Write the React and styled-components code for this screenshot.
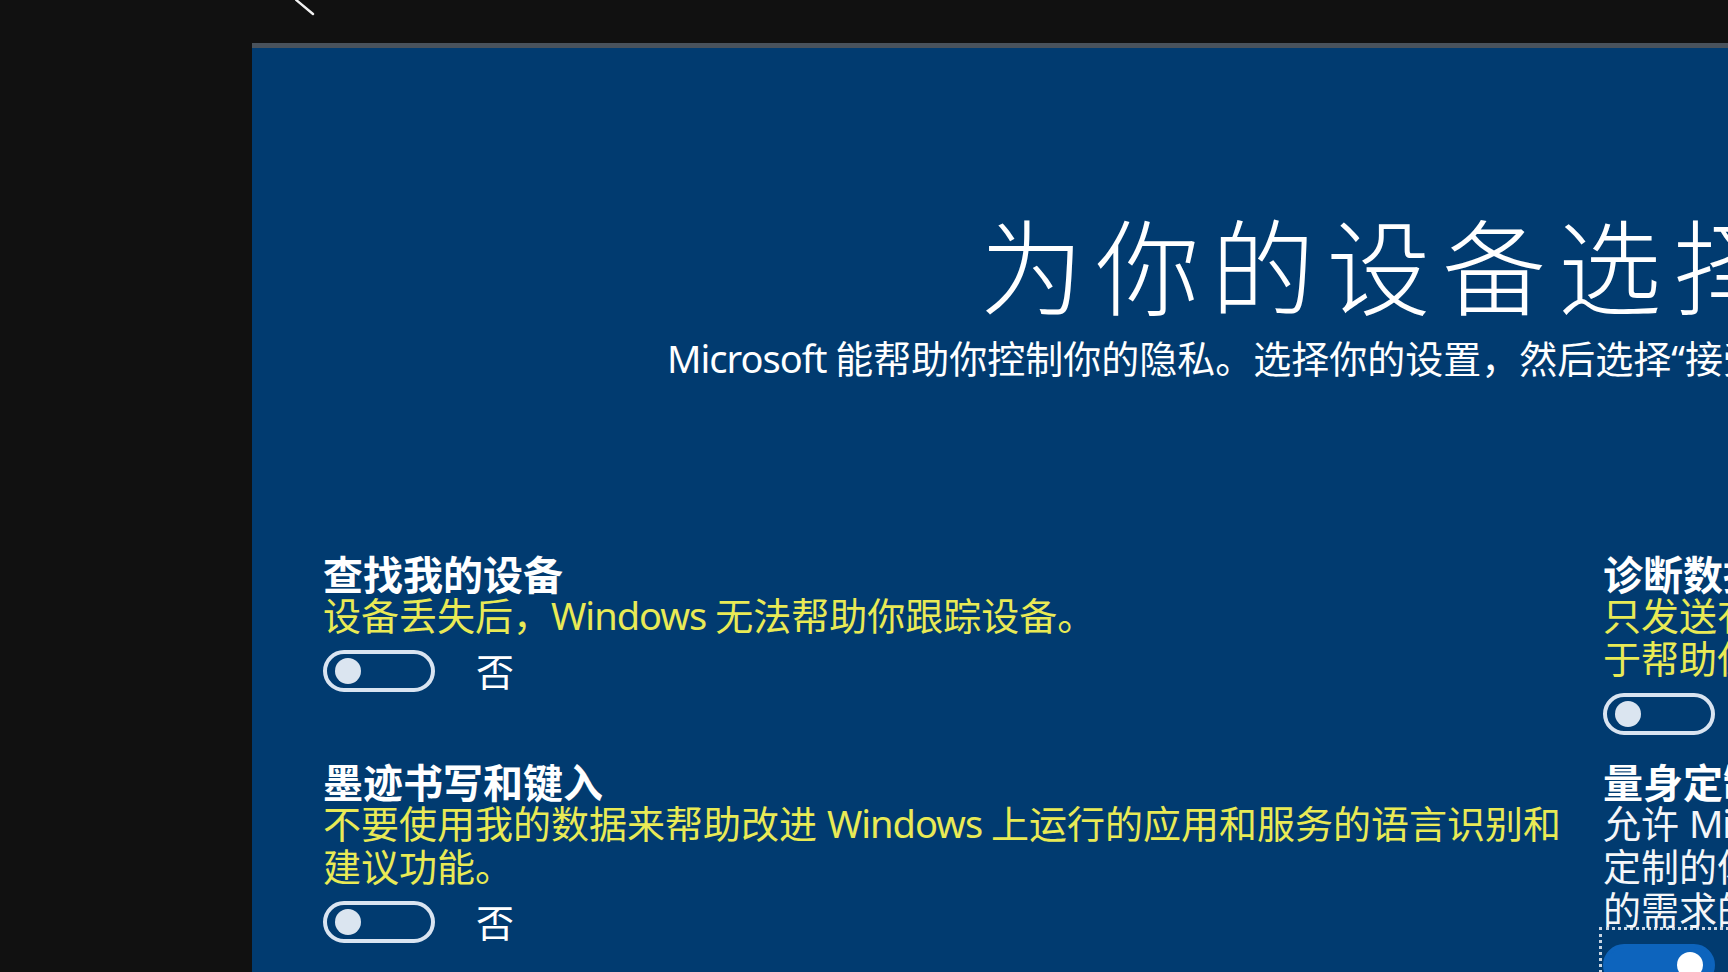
import React from "react";
import styled, { createGlobalStyle } from "styled-components";

const Global = createGlobalStyle`
  html, body { margin: 0; padding: 0; background: #111111; }
  body { overflow: hidden; }
  * { box-sizing: border-box; }
`;

const FONT = `"Noto Sans", "Noto Sans CJK SC", sans-serif`;

const Screen = styled.div`
  width: 1728px;
  height: 972px;
  overflow: hidden;
  background: #111111;
  display: flex;
  flex-direction: column;
  font-family: ${FONT};
`;

const TopBar = styled.div`
  height: 43px;
  flex: 0 0 43px;
  padding-left: 295px;
  display: flex;
  align-items: flex-start;
`;

const BackArrow = () => (
  <svg width="22" height="18" viewBox="0 0 22 18" aria-hidden="true">
    <line x1="0" y1="-1" x2="18" y2="14" stroke="#f2f2f2" strokeWidth="2.4" strokeLinecap="round" />
  </svg>
);

const Panel = styled.main`
  flex: 1;
  margin-left: 252px;
  background: #013b70;
  border-top: 5px solid #49525c;
  overflow: hidden;
  color: #ffffff;
`;

const Header = styled.header`
  padding-top: 168px;
  display: flex;
  flex-direction: column;
`;

const Title = styled.h1`
  margin: 0 0 0 728px;
  font-size: 104px;
  letter-spacing: 11.5px;
  line-height: 1;
  font-weight: 300;
  white-space: nowrap;
  color: #ffffff;
`;

const Subtitle = styled.p`
  margin: 16px 0 0 415px;
  font-size: 38px;
  line-height: 1.2;
  white-space: nowrap;
  color: #ffffff;
`;

const Latin = styled.span`
  letter-spacing: -1px;
`;

const Grid = styled.section`
  margin: 174px 0 0 71px;
  display: grid;
  grid-template-columns: 1240px 1240px;
  column-gap: 40px;
  row-gap: 28px;
  align-items: start;
`;

const Setting = styled.div`
  display: flex;
  flex-direction: column;
`;

const Heading = styled.h2`
  margin: 0;
  font-size: 40px;
  line-height: 38px;
  font-weight: 700;
  white-space: nowrap;
  color: #ffffff;
`;

const Desc = styled.div`
  font-size: 38px;
  line-height: 43px;
  color: ${(p) => (p.$plain ? "#f4f6f8" : "#e9ea55")};
`;

const Line = styled.span`
  display: block;
  white-space: nowrap;
`;

const ToggleRow = styled.div`
  position: relative;
  margin-top: 13px;
  display: flex;
  align-items: center;
  gap: 41px;
  align-self: flex-start;
  ${(p) =>
    p.$focused &&
    `
    &::before {
      content: "";
      position: absolute;
      left: -4px;
      top: -17px;
      right: -20px;
      bottom: -17px;
      border: 3px dotted rgba(235, 240, 246, 0.85);
      pointer-events: none;
    }
  `}
`;

const Track = styled.span`
  width: 112px;
  height: 42px;
  border-radius: 21px;
  border: 4px solid ${(p) => (p.$on ? "#0d64bd" : "#d9e4f1")};
  background: ${(p) => (p.$on ? "#0d64bd" : "transparent")};
  display: flex;
  align-items: center;
  justify-content: ${(p) => (p.$on ? "flex-end" : "flex-start")};
  padding: 0 8px;
`;

const Knob = styled.span`
  width: 26px;
  height: 26px;
  border-radius: 50%;
  background: ${(p) => (p.$on ? "#ffffff" : "#dbe5f0")};
`;

const ToggleLabel = styled.span`
  font-size: 38px;
  line-height: 43px;
  color: #ffffff;
`;

function Mixed({ text }) {
  const parts = text.split(/([A-Za-z]+ ?)/);
  return parts.map((part, i) =>
    /[A-Za-z]/.test(part) ? <Latin key={i}>{part}</Latin> : <React.Fragment key={i}>{part}</React.Fragment>
  );
}

const settings = [
  {
    title: "查找我的设备",
    lines: ["设备丢失后，Windows 无法帮助你跟踪设备。"],
    on: false,
  },
  {
    title: "诊断数据",
    lines: [
      "只发送有关你的设备、其设置和功能以及设备是否正常运行的信息。诊断数据用",
      "于帮助保持 Windows 的安全性和最新状态、排查问题以及改进产品。",
    ],
    on: false,
  },
  {
    title: "墨迹书写和键入",
    lines: [
      "不要使用我的数据来帮助改进 Windows 上运行的应用和服务的语言识别和",
      "建议功能。",
    ],
    on: false,
  },
  {
    title: "量身定制的体验",
    lines: [
      "允许 Microsoft 使用你的诊断数据为你提供个性化提示、广告和建议，以便提供量身",
      "定制的体验，从而增强你的 Microsoft 体验，并提供更能满足你",
      "的需求的推荐内容。",
    ],
    on: true,
    plain: true,
    focused: true,
  },
];

export default function App() {
  return (
    <>
      <Global />
      <Screen>
        <TopBar>
          <BackArrow />
        </TopBar>
        <Panel>
          <Header>
            <Title>为你的设备选择隐私设置</Title>
            <Subtitle>
              <Mixed text="Microsoft 能帮助你控制你的隐私。选择你的设置，然后选择“接受”以保存这些设置。你可以随时更改这些设置。" />
            </Subtitle>
          </Header>
          <Grid>
            {settings.map((s) => (
              <Setting key={s.title}>
                <Heading>{s.title}</Heading>
                <Desc $plain={s.plain}>
                  {s.lines.map((l) => (
                    <Line key={l}>
                      <Mixed text={l} />
                    </Line>
                  ))}
                </Desc>
                <ToggleRow $focused={s.focused}>
                  <Track $on={s.on}>
                    <Knob $on={s.on} />
                  </Track>
                  <ToggleLabel>{s.on ? "是" : "否"}</ToggleLabel>
                </ToggleRow>
              </Setting>
            ))}
          </Grid>
        </Panel>
      </Screen>
    </>
  );
}
